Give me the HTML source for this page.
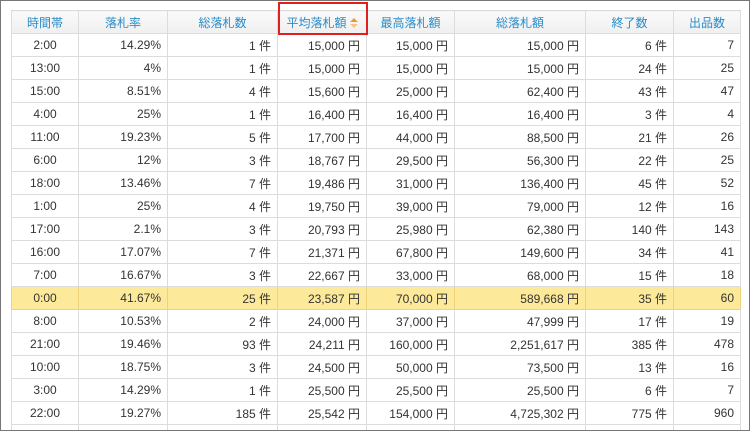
<!DOCTYPE html>
<html><head><meta charset="utf-8"><style>
body{margin:0;width:750px;height:431px;overflow:hidden;background:#fff;font-family:"Liberation Sans","Noto Sans CJK JP",sans-serif;}
.frame{position:absolute;left:0;top:0;width:748px;height:429px;border:1px solid #777;z-index:5;pointer-events:none;}
.clip{position:absolute;left:0;top:0;width:750px;height:430px;overflow:hidden;}
table{position:absolute;left:11px;top:10px;border-collapse:collapse;table-layout:fixed;font-size:12px;color:#333;}
td,th{height:22px;border:1px solid #dcdcdc;padding:0 6px;text-align:right;white-space:nowrap;}
th{font-weight:normal;color:#2a8cc8;text-align:center;background:linear-gradient(#fafafa,#efefef);}
td:first-child{text-align:center;}
tr.hl td{background:#fde99a;border-color:#f0d27c;}
.box{position:absolute;left:278px;top:2px;width:90px;height:33px;border:2px solid #e02020;box-sizing:border-box;z-index:6;}
.arr{display:inline-block;width:8px;height:10px;vertical-align:middle;margin-left:3px;}
</style></head><body>
<div class="frame"></div>
<div class="clip">
<table>
<colgroup><col style="width:67px"><col style="width:89px"><col style="width:110px"><col style="width:89px"><col style="width:88px"><col style="width:131px"><col style="width:88px"><col style="width:67px"></colgroup>
<tr><th>時間帯</th><th>落札率</th><th>総落札数</th><th>平均落札額<svg class="arr" viewBox="0 0 8 10"><path d="M4 0L8 4H0Z" fill="#f29a2e"/><path d="M0 6H8L4 10Z" fill="#f6c489"/></svg></th><th>最高落札額</th><th>総落札額</th><th>終了数</th><th>出品数</th></tr>
<tr><td>2:00</td><td>14.29%</td><td>1 件</td><td>15,000 円</td><td>15,000 円</td><td>15,000 円</td><td>6 件</td><td>7</td></tr>
<tr><td>13:00</td><td>4%</td><td>1 件</td><td>15,000 円</td><td>15,000 円</td><td>15,000 円</td><td>24 件</td><td>25</td></tr>
<tr><td>15:00</td><td>8.51%</td><td>4 件</td><td>15,600 円</td><td>25,000 円</td><td>62,400 円</td><td>43 件</td><td>47</td></tr>
<tr><td>4:00</td><td>25%</td><td>1 件</td><td>16,400 円</td><td>16,400 円</td><td>16,400 円</td><td>3 件</td><td>4</td></tr>
<tr><td>11:00</td><td>19.23%</td><td>5 件</td><td>17,700 円</td><td>44,000 円</td><td>88,500 円</td><td>21 件</td><td>26</td></tr>
<tr><td>6:00</td><td>12%</td><td>3 件</td><td>18,767 円</td><td>29,500 円</td><td>56,300 円</td><td>22 件</td><td>25</td></tr>
<tr><td>18:00</td><td>13.46%</td><td>7 件</td><td>19,486 円</td><td>31,000 円</td><td>136,400 円</td><td>45 件</td><td>52</td></tr>
<tr><td>1:00</td><td>25%</td><td>4 件</td><td>19,750 円</td><td>39,000 円</td><td>79,000 円</td><td>12 件</td><td>16</td></tr>
<tr><td>17:00</td><td>2.1%</td><td>3 件</td><td>20,793 円</td><td>25,980 円</td><td>62,380 円</td><td>140 件</td><td>143</td></tr>
<tr><td>16:00</td><td>17.07%</td><td>7 件</td><td>21,371 円</td><td>67,800 円</td><td>149,600 円</td><td>34 件</td><td>41</td></tr>
<tr><td>7:00</td><td>16.67%</td><td>3 件</td><td>22,667 円</td><td>33,000 円</td><td>68,000 円</td><td>15 件</td><td>18</td></tr>
<tr class="hl"><td>0:00</td><td>41.67%</td><td>25 件</td><td>23,587 円</td><td>70,000 円</td><td>589,668 円</td><td>35 件</td><td>60</td></tr>
<tr><td>8:00</td><td>10.53%</td><td>2 件</td><td>24,000 円</td><td>37,000 円</td><td>47,999 円</td><td>17 件</td><td>19</td></tr>
<tr><td>21:00</td><td>19.46%</td><td>93 件</td><td>24,211 円</td><td>160,000 円</td><td>2,251,617 円</td><td>385 件</td><td>478</td></tr>
<tr><td>10:00</td><td>18.75%</td><td>3 件</td><td>24,500 円</td><td>50,000 円</td><td>73,500 円</td><td>13 件</td><td>16</td></tr>
<tr><td>3:00</td><td>14.29%</td><td>1 件</td><td>25,500 円</td><td>25,500 円</td><td>25,500 円</td><td>6 件</td><td>7</td></tr>
<tr><td>22:00</td><td>19.27%</td><td>185 件</td><td>25,542 円</td><td>154,000 円</td><td>4,725,302 円</td><td>775 件</td><td>960</td></tr>
<tr><td>20:00</td><td>21.43%</td><td>15 件</td><td>25,960 円</td><td>70,000 円</td><td>389,400 円</td><td>55 件</td><td>70</td></tr>
</table>
</div>
<div class="box"></div>
</body></html>
